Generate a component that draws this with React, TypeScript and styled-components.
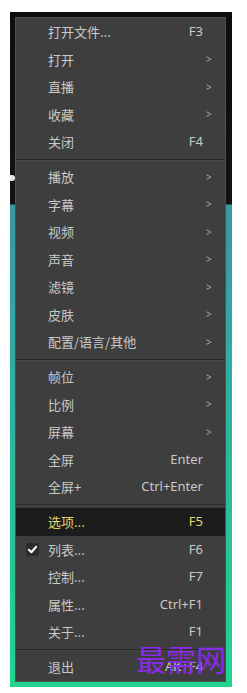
import React from "react";
import styled, { createGlobalStyle } from "styled-components";

const Global = createGlobalStyle`
  html, body { margin: 0; padding: 0; background: #ffffff; }
  body { font-family: "Noto Sans CJK SC", "Noto Sans", sans-serif; }
`;

const Window = styled.div`
  position: relative;
  width: 222px;
  box-sizing: border-box;
  margin: 12px 0 0 10px;
  padding: 5px 6px 5px 5px;
  background: linear-gradient(
    180deg,
    #0e0e0e 0px,
    #121212 192px,
    #3a96a4 193px,
    #33aaa2 50%,
    #22d48f 100%
  );
  &::before {
    content: "";
    position: absolute;
    left: 0px;
    top: 163px;
    width: 5px;
    height: 6px;
    border-radius: 0 3px 3px 0;
    background: #e8e8e8;
  }
`;

const Menu = styled.div`
  width: 211px;
  box-sizing: border-box;
  background: #3e3e3e;
  border: 1px solid #4f4f4f;
  display: flex;
  flex-direction: column;
`;

const Row = styled.div<{ $active?: boolean }>`
  height: 27.5px;
  display: grid;
  grid-template-columns: 32px 1fr auto 22px;
  align-items: center;
  background: ${(p) => (p.$active ? "#1c1c1c" : "transparent")};
  color: ${(p) => (p.$active ? "#e6d56a" : "#c9c9c9")};
  font-size: 13px;
  line-height: 1;
`;

const CheckCell = styled.div`
  display: flex;
  align-items: center;
  justify-content: center;
`;

const CheckBox = styled.div`
  width: 13px;
  height: 13px;
  background: #2a2a30;
  border-radius: 2px;
  display: flex;
  align-items: center;
  justify-content: center;
`;

const Label = styled.span`
  font-family: "Noto Sans CJK SC", "Noto Sans", sans-serif;
  white-space: nowrap;
`;

const Shortcut = styled.span`
  font-family: "Noto Sans", "Open Sans", sans-serif;
  font-size: 13px;
  white-space: nowrap;
  text-align: right;
`;

const Arrow = styled.span`
  font-family: "Noto Sans", sans-serif;
  font-size: 10px;
  color: #a8a8a8;
  padding-left: 3px;
`;

const Separator = styled.div`
  height: 7.5px;
  display: flex;
  flex-direction: column;
  justify-content: flex-start;
  &::before {
    content: "";
    display: block;
    margin-top: 3px;
    height: 1px;
    background: #282828;
  }
  &::after {
    content: "";
    display: block;
    height: 1px;
    background: #474747;
  }
`;

const Watermark = styled.div`
  position: absolute;
  left: 126px;
  top: 631px;
  font-family: "Noto Sans CJK SC", serif;
  font-size: 30px;
  line-height: 1;
  color: #8b2ae6;
  white-space: nowrap;
  pointer-events: none;
`;

type Item =
  | { sep: true }
  | {
      sep?: false;
      label: string;
      shortcut?: string;
      sub?: boolean;
      active?: boolean;
      checked?: boolean;
    };

const items: Item[] = [
  { label: "打开文件...", shortcut: "F3" },
  { label: "打开", sub: true },
  { label: "直播", sub: true },
  { label: "收藏", sub: true },
  { label: "关闭", shortcut: "F4" },
  { sep: true },
  { label: "播放", sub: true },
  { label: "字幕", sub: true },
  { label: "视频", sub: true },
  { label: "声音", sub: true },
  { label: "滤镜", sub: true },
  { label: "皮肤", sub: true },
  { label: "配置/语言/其他", sub: true },
  { sep: true },
  { label: "帧位", sub: true },
  { label: "比例", sub: true },
  { label: "屏幕", sub: true },
  { label: "全屏", shortcut: "Enter" },
  { label: "全屏+", shortcut: "Ctrl+Enter" },
  { sep: true },
  { label: "选项...", shortcut: "F5", active: true },
  { label: "列表...", shortcut: "F6", checked: true },
  { label: "控制...", shortcut: "F7" },
  { label: "属性...", shortcut: "Ctrl+F1" },
  { label: "关于...", shortcut: "F1" },
  { sep: true },
  { label: "退出", shortcut: "Alt+F4" },
];

const Check = () => (
  <svg width="11" height="11" viewBox="0 0 12 12">
    <path
      d="M2 6.3 L4.8 9 L10 3"
      fill="none"
      stroke="#ffffff"
      strokeWidth="2.2"
      strokeLinecap="round"
      strokeLinejoin="round"
    />
  </svg>
);

export default function App() {
  return (
    <>
      <Global />
      <Window>
        <Menu>
          {items.map((it, i) =>
            it.sep ? (
              <Separator key={i} />
            ) : (
              <Row key={i} $active={it.active}>
                <CheckCell>
                  {it.checked ? (
                    <CheckBox>
                      <Check />
                    </CheckBox>
                  ) : null}
                </CheckCell>
                <Label>{it.label}</Label>
                <Shortcut>{it.shortcut ?? ""}</Shortcut>
                <Arrow>{it.sub ? ">" : ""}</Arrow>
              </Row>
            )
          )}
        </Menu>
        <Watermark>最需网</Watermark>
      </Window>
    </>
  );
}
